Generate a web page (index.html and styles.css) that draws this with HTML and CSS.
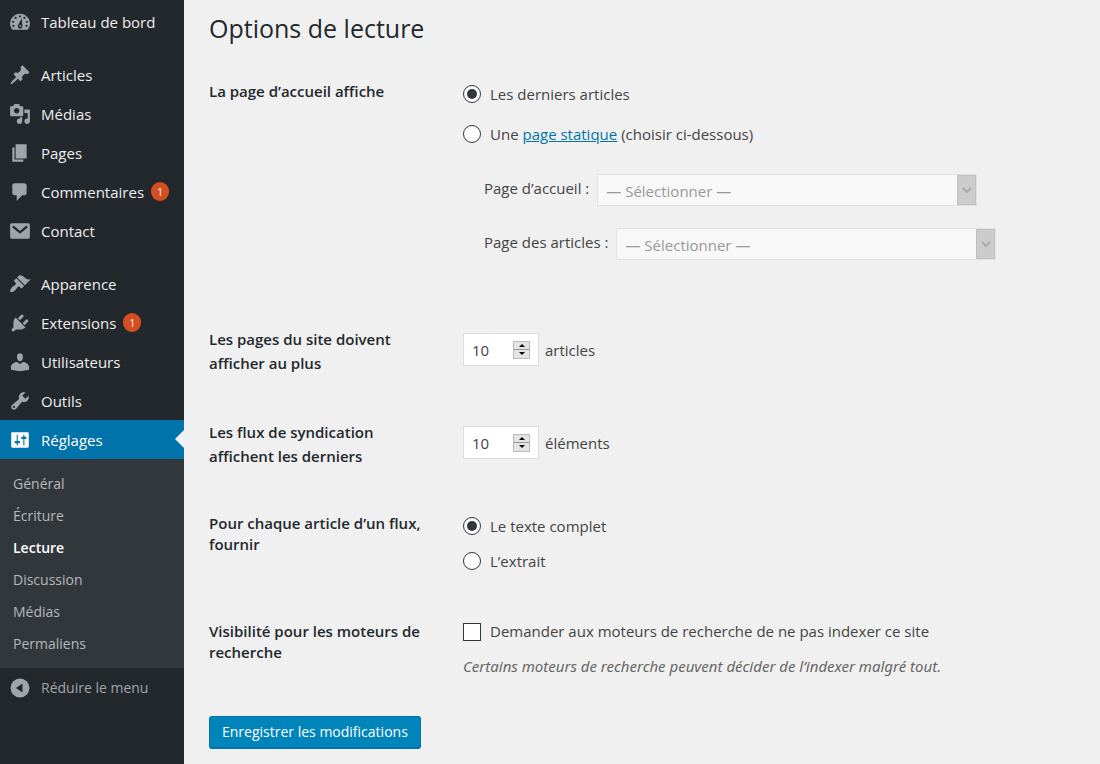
FILE: index.html
```html
<!DOCTYPE html>
<html lang="fr">
<head>
<meta charset="utf-8">
<meta name="viewport" content="width=device-width, initial-scale=1">
<title>Options de lecture</title>
<link rel="stylesheet" href="styles.css">
</head>
<body>
<div class="layout">
  <nav class="sidebar" aria-label="Menu principal">
    <ul class="menu">
      <li><a class="item" href="#"><svg class="icon" viewBox="0 0 20 20"><path d="M3.2 17h13.6C18.100 15.500 19 13.700 19 11.600 19 6.500 15 2.500 10 2.500S1 6.500 1 11.600C1 13.700 1.900 15.500 3.200 17z"/><g class="cut"><circle cx="10" cy="4.800" r="1"/><circle cx="6" cy="6.300" r="1"/><circle cx="14" cy="6.300" r="1"/><circle cx="3.700" cy="9.800" r="1"/><circle cx="16.300" cy="9.800" r="1"/><circle cx="4" cy="13.500" r="1"/><circle cx="16" cy="13.500" r="1"/><path d="M11.700 6.500 12.100 13.600A2.100 2.100 0 1 1 8.300 12.700z"/></g><circle cx="10.100" cy="13.600" r=".8"/></svg>Tableau de bord</a></li>
      <li class="group-start"><a class="item" href="#"><svg class="icon" viewBox="0 0 20 20"><path d="M10.440 3.020l1.820-1.820 6.360 6.350-1.830 1.820c-1.050-.68-2.480-.57-3.410.36l-.75.75c-.92.93-1.040 2.350-.35 3.410l-1.830 1.820-2.410-2.410-2.800 2.790c-.42.42-3.380 2.710-3.800 2.290s1.860-3.390 2.280-3.810l2.790-2.790L4.100 9.360l1.830-1.820c1.050.69 2.480.57 3.400-.36l.75-.75c.93-.92 1.050-2.350.36-3.410z"/></svg>Articles</a></li>
      <li><a class="item" href="#"><svg class="icon" viewBox="0 0 20 20"><path d="M13 11V4c0-.55-.45-1-1-1h-1.670L9 1H5L3.670 3H2c-.55 0-1 .45-1 1v7c0 .55.45 1 1 1h10c.55 0 1-.45 1-1zM7 4.500c1.380 0 2.500 1.120 2.500 2.500S8.380 9.500 7 9.500 4.500 8.380 4.500 7 5.620 4.500 7 4.500zM14 6h5v10.500c0 1.380-1.120 2.500-2.500 2.500S14 17.880 14 16.500s1.120-2.500 2.500-2.500c.17 0 .34.020.5.050V9h-3V6zm-4 8.050V13h2v3.500c0 1.380-1.120 2.500-2.500 2.500S7 17.880 7 16.500 8.120 14 9.500 14c.17 0 .34.020.5.050z"/></svg>Médias</a></li>
      <li><a class="item" href="#"><svg class="icon" viewBox="0 0 20 20"><path d="M6 15V2h10v13H6zm-1 1h8v2H3V5h2v11z"/></svg>Pages</a></li>
      <li><a class="item" href="#"><svg class="icon" viewBox="0 0 20 20"><path d="M5 2h9c1.100 0 2 .9 2 2v7c0 1.100-.9 2-2 2h-2l-5 5v-5H5c-1.100 0-2-.9-2-2V4c0-1.100.9-2 2-2z"/></svg>Commentaires<span class="badge">1</span></a></li>
      <li><a class="item" href="#"><svg class="icon" viewBox="0 0 20 20"><rect x="1" y="3" width="18" height="14" rx="1.500"/><path class="flap" d="M3.500 5.800 10 11.300 16.500 5.800"/></svg>Contact</a></li>
      <li class="group-start"><a class="item" href="#"><svg class="icon" viewBox="0 0 20 20"><path d="M14.480 11.060L7.410 3.990l1.500-1.500c.5-.56 2.300-.47 3.510.32 1.210.8 1.430 1.280 2.910 2.100 1.180.64 2.450 1.260 4.450.85zm-.71.71L6.700 4.700 4.930 6.470c-.39.39-.39 1.020 0 1.410l1.060 1.060c.39.39.39 1.030 0 1.420-.6.6-1.430 1.110-2.210 1.690-.35.26-.7.53-1.010.84C1.430 14.230.4 16.080 1.400 17.070c.99 1 2.840-.03 4.180-1.360.31-.31.58-.66.85-1.020.57-.78 1.080-1.610 1.690-2.210.39-.39 1.020-.39 1.410 0l1.060 1.060c.39.39 1.020.39 1.410 0z"/></svg>Apparence</a></li>
      <li><a class="item" href="#"><svg class="icon" viewBox="0 0 20 20"><path d="M13.110 4.360L9.870 7.600 8 5.730l3.240-3.240c.35-.34 1.050-.2 1.560.32.52.51.66 1.210.31 1.550zm-8 1.770l.91-1.120 9.010 9.010-1.190.84c-.71.71-2.630 1.160-3.820 1.160H6.140L4.900 17.260c-.59.59-1.540.59-2.120 0-.59-.58-.59-1.530 0-2.120l1.240-1.240v-3.880c0-1.130.4-3.190 1.090-3.890zm7.260 3.970l3.240-3.240c.34-.35 1.040-.21 1.550.31.52.51.66 1.210.31 1.550l-3.240 3.250z"/></svg>Extensions<span class="badge">1</span></a></li>
      <li><a class="item" href="#"><svg class="icon" viewBox="0 0 20 20"><path d="M10 9.250c-2.270 0-2.730-3.440-2.730-3.440C7 4.020 7.820 2 9.970 2c2.160 0 2.980 2.020 2.710 3.810 0 0-.41 3.440-2.680 3.440zm0 2.570L12.720 10c2.390 0 5.520 2.330 5.520 4.530v2.490s-4.650 1.130-8.240 1.130c-3.650 0-8.240-1.130-8.240-1.130v-2.490c0-2.250 2.940-4.480 5.470-4.480z"/></svg>Utilisateurs</a></li>
      <li><a class="item" href="#"><svg class="icon" viewBox="0 0 20 20"><path d="M16.680 9.770c-1.340 1.340-3.300 1.670-4.950.99l-5.410 6.520c-.99.99-2.590.99-3.580 0s-.99-2.590 0-3.570l6.520-5.420c-.68-1.650-.35-3.610.99-4.950 1.280-1.280 3.120-1.620 4.720-1.060l-2.890 2.890 2.820 2.820 2.860-2.870c.53 1.580.18 3.390-1.080 4.650zM3.810 16.210c.4.39 1.040.39 1.430 0 .4-.4.4-1.040 0-1.430-.39-.4-1.030-.4-1.430 0-.39.39-.39 1.030 0 1.430z"/></svg>Outils</a></li>
      <li>
        <a class="item item-current" href="#"><svg class="icon" viewBox="0 0 20 20"><path d="M18 16V4c0-.55-.45-1-1-1H3c-.55 0-1 .45-1 1v12c0 .55.45 1 1 1h14c.55 0 1-.45 1-1zM8 11h1c.55 0 1 .45 1 1s-.45 1-1 1H8v1.500c0 .28-.22.5-.5.5s-.5-.22-.5-.5V13H6c-.55 0-1-.45-1-1s.45-1 1-1h1V5.500c0-.28.22-.5.5-.5s.5.22.5.5V11zm5-2h-1c-.55 0-1-.45-1-1s.45-1 1-1h1V5.500c0-.28.22-.5.5-.5s.5.22.5.5V7h1c.55 0 1 .45 1 1s-.45 1-1 1h-1v5.500c0 .28-.22.5-.5.5s-.5-.22-.5-.5V9z"/></svg>Réglages<span class="pointer"></span></a>
        <ul class="submenu">
          <li><a href="#">Général</a></li>
          <li><a href="#">Écriture</a></li>
          <li><a class="sub-current" href="#" aria-current="page">Lecture</a></li>
          <li><a href="#">Discussion</a></li>
          <li><a href="#">Médias</a></li>
          <li><a href="#">Permaliens</a></li>
        </ul>
      </li>
      <li><button class="item collapse" type="button"><svg class="icon" viewBox="0 0 20 20"><circle cx="10" cy="10" r="8.600"/><path class="cut" d="M12.300 5.800v8.400L6.300 10z"/></svg>Réduire le menu</button></li>
    </ul>
  </nav>

  <main class="content">
    <h1>Options de lecture</h1>
    <form>
      <div class="row row-front" role="group" aria-labelledby="front-title">
        <div class="title" id="front-title">La page d’accueil affiche</div>
        <div class="field front">
          <label class="choice"><input type="radio" name="front" checked>Les derniers articles</label>
          <div class="choice"><input type="radio" name="front" id="front-page"><span><label for="front-page">Une</label> <a href="#">page statique</a> <label for="front-page">(choisir ci-dessous)</label></span></div>
          <div class="picks">
            <div class="pick">
              <label for="home-page">Page d’accueil :</label>
              <span class="select"><select id="home-page" disabled><option>— Sélectionner —</option></select><span class="arrow"><svg viewBox="0 0 10 6"><path d="M1 1 5 5 9 1"/></svg></span></span>
            </div>
            <div class="pick">
              <label for="posts-page">Page des articles :</label>
              <span class="select"><select id="posts-page" disabled><option>— Sélectionner —</option></select><span class="arrow"><svg viewBox="0 0 10 6"><path d="M1 1 5 5 9 1"/></svg></span></span>
            </div>
          </div>
        </div>
      </div>

      <div class="row row-count">
        <label class="title" for="per-page">Les pages du site doivent afficher au plus</label>
        <div class="field amount">
          <span class="number"><input type="number" id="per-page" value="10" min="1"><span class="stepper"><button type="button" aria-label="Augmenter"><svg viewBox="0 0 6 3"><path d="M0 3 3 0 6 3z"/></svg></button><button type="button" aria-label="Diminuer"><svg viewBox="0 0 6 3"><path d="M0 0 3 3 6 0z"/></svg></button></span></span>
          <span>articles</span>
        </div>
      </div>

      <div class="row row-count">
        <label class="title" for="per-feed">Les flux de syndication affichent les derniers</label>
        <div class="field amount">
          <span class="number"><input type="number" id="per-feed" value="10" min="1"><span class="stepper"><button type="button" aria-label="Augmenter"><svg viewBox="0 0 6 3"><path d="M0 3 3 0 6 3z"/></svg></button><button type="button" aria-label="Diminuer"><svg viewBox="0 0 6 3"><path d="M0 0 3 3 6 0z"/></svg></button></span></span>
          <span>éléments</span>
        </div>
      </div>

      <div class="row row-tight" role="group" aria-labelledby="feed-title">
        <div class="title" id="feed-title">Pour chaque article d’un flux, fournir</div>
        <div class="field feed">
          <label class="choice"><input type="radio" name="feed" checked>Le texte complet</label>
          <label class="choice"><input type="radio" name="feed">L’extrait</label>
        </div>
      </div>

      <div class="row row-tight row-last" role="group" aria-labelledby="seo-title">
        <div class="title" id="seo-title">Visibilité pour les moteurs de recherche</div>
        <div class="field seo">
          <label class="choice"><input type="checkbox">Demander aux moteurs de recherche de ne pas indexer ce site</label>
          <p class="hint">Certains moteurs de recherche peuvent décider de l’indexer malgré tout.</p>
        </div>
      </div>

      <button class="save" type="submit">Enregistrer les modifications</button>
    </form>
  </main>
</div>
</body>
</html>
```

FILE: styles.css
```css
* {
  box-sizing: border-box;
}

body {
  margin: 0;
  background: #f0f0f0;
  color: #444;
  font: 15px/24px "Segoe UI", "Open Sans", "Noto Sans", sans-serif;
}

a {
  color: #0073aa;
}

button,
input,
select {
  margin: 0;
  font: inherit;
  color: inherit;
}

.layout {
  display: flex;
  min-height: 100vh;
}

/* Sidebar */
.sidebar {
  flex: 0 0 184px;
  padding-top: 2px;
  background: #23282d;
}

.menu,
.submenu {
  margin: 0;
  padding: 0;
  list-style: none;
}

.group-start {
  margin-top: 14px;
}

.item {
  position: relative;
  display: flex;
  align-items: center;
  width: 100%;
  height: 39px;
  padding: 0 0 0 9px;
  border: 0;
  background: none;
  color: #eee;
  text-decoration: none;
}

.icon {
  flex: none;
  width: 22px;
  height: 22px;
  margin-right: 10px;
  fill: #a0a5aa;
}

.cut {
  fill: #23282d;
}

.flap {
  fill: none;
  stroke: #23282d;
  stroke-width: 2;
}

.badge {
  width: 18px;
  height: 19px;
  margin-left: 7px;
  border-radius: 10px;
  background: #d54e21;
  color: #fff;
  font-size: 10px;
  line-height: 20px;
  text-align: center;
}

.item-current {
  background: #0073aa;
  color: #fff;
}

.item-current .icon {
  fill: #fff;
}

.pointer {
  position: absolute;
  top: 10px;
  right: 0;
  border: 9px solid transparent;
  border-left: 0;
  border-right-color: #f0f0f0;
}

.submenu {
  padding: 9px 0 8px;
  background: #32373c;
}

.submenu a {
  display: block;
  padding: 4px 13px;
  color: #b4b9be;
  font-size: 14px;
  text-decoration: none;
}

.submenu .sub-current {
  color: #fff;
  font-weight: 600;
}

.collapse {
  color: #a0a5aa;
  font-size: 14px;
}

/* Settings form */
.content {
  flex: 1;
  min-width: 0;
  padding: 12px 25px 14px;
}

h1 {
  margin: 0 0 35px;
  color: #23282d;
  font-size: 25px;
  font-weight: 400;
  line-height: 32px;
}

.row {
  display: grid;
  grid-template-columns: 224px minmax(0, 1fr);
  column-gap: 30px;
  margin-bottom: 45px;
}

.row-front {
  margin-bottom: 67px;
}

.row-tight {
  margin-bottom: 48px;
}

.row-last {
  margin-bottom: 38px;
}

.title {
  color: #23282d;
  font-size: 15px;
  font-weight: 600;
}

.row-tight .title {
  line-height: 21px;
}

.choice {
  display: flex;
  align-items: center;
  gap: 9px;
}

.front {
  display: grid;
  gap: 16px;
  padding-top: 3px;
}

.feed {
  display: grid;
  gap: 11px;
  padding-top: 1px;
}

.choice input {
  flex: none;
  display: grid;
  place-items: center;
  width: 18px;
  height: 18px;
  border: 1px solid #32373c;
  background: #fff;
  appearance: none;
}

.choice input[type="radio"] {
  border-radius: 50%;
}

.choice input[type="radio"]:checked::before {
  content: "";
  width: 10px;
  height: 10px;
  border-radius: 50%;
  background: #32373c;
}

.choice input[type="checkbox"]:checked::before {
  content: "✓";
}

.picks {
  display: grid;
  gap: 22px;
  padding: 12px 0 0 21px;
}

.pick {
  display: flex;
  gap: 8px;
}

.pick label {
  flex: none;
  padding-top: 2px;
}

.select {
  display: flex;
  flex: 0 1 380px;
  height: 32px;
  border: 1px solid #e2e2e2;
  background: #f8f8f8;
}

.select select {
  flex: 1;
  min-width: 0;
  padding: 1px 8px 0;
  border: 0;
  background: none;
  color: #999;
  opacity: 1;
  appearance: none;
}

.arrow {
  display: grid;
  place-items: center;
  width: 19px;
  border: 1px solid #c0c0c0;
  background: #ccc;
}

.arrow svg {
  width: 10px;
  height: 6px;
  fill: none;
  stroke: #aaa;
  stroke-width: 2;
}

.amount {
  display: flex;
  align-items: center;
  gap: 6px;
  height: 33px;
  margin-top: 6px;
}

.row-count {
  height: 48px;
}

.number {
  display: flex;
  align-items: center;
  width: 76px;
  height: 33px;
  padding: 0 8px;
  border: 1px solid #ddd;
  background: #fff;
}

.number input {
  flex: 1;
  min-width: 0;
  padding: 0;
  border: 0;
  background: none;
  appearance: textfield;
}

.stepper {
  display: grid;
  width: 17px;
  height: 18px;
  border: 1px solid #bbb;
  background: #999;
  gap: 1px;
}

.stepper button {
  display: grid;
  place-items: center;
  min-height: 0;
  padding: 0;
  border: 0;
  background: #e4e4e4;
}

.stepper svg {
  width: 6px;
  height: 3px;
  fill: #000;
}

.seo .choice {
  line-height: 21px;
}

.hint {
  margin: 12px 0 0;
  color: #666;
  font-family: "Segoe UI", "Noto Sans", sans-serif;
  font-style: italic;
}

.save {
  height: 33px;
  padding: 0 12px;
  border: 1px solid #0073aa;
  border-bottom-width: 2px;
  border-radius: 3px;
  background: #0085ba;
  color: #fff;
  font-size: 14px;
}
```
